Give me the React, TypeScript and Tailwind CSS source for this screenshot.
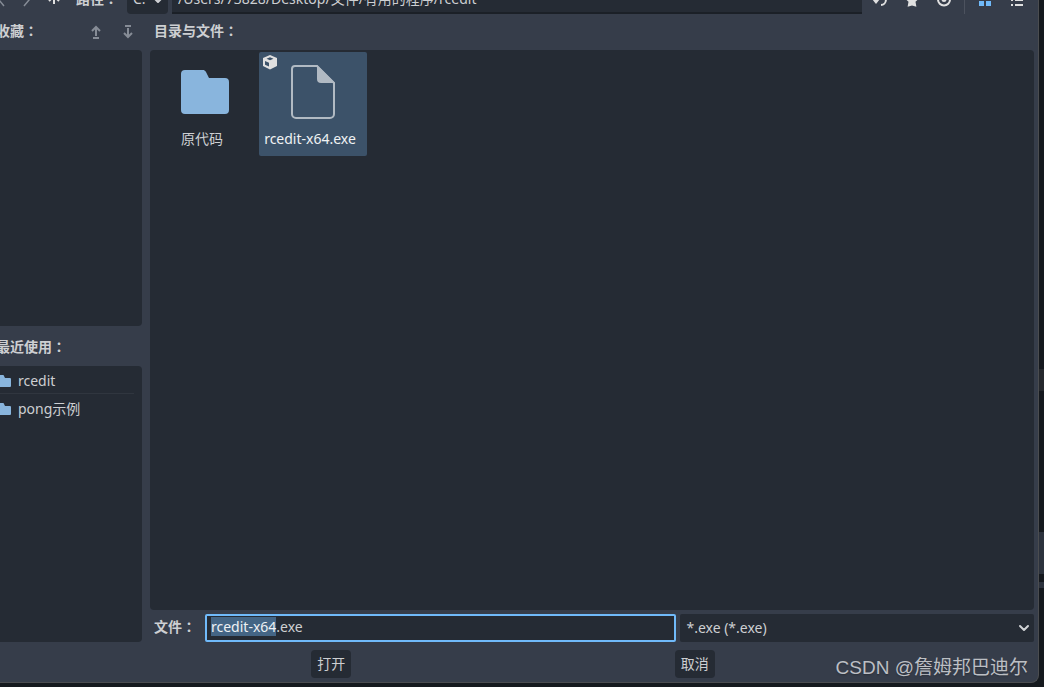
import React, { useEffect, useRef } from 'react';

const favorites: string[] = [];
const recents = ['rcedit', 'pong示例'];

// CJK colon is centred in its cell, unlike the SC glyph
function Title({ children, htmlFor }: { children: string; htmlFor?: string }) {
  const Tag = htmlFor ? 'label' : 'span';
  return (
    <Tag htmlFor={htmlFor} className="font-bold whitespace-nowrap">
      {children}
      <span className="font-['Noto_Sans_CJK_TC',sans-serif]">：</span>
    </Tag>
  );
}

function IconButton({ label, dim, children }: { label: string; dim?: boolean; children: React.ReactNode }) {
  return (
    <button
      aria-label={label}
      className={`flex h-7 w-7 shrink-0 items-center justify-center ${dim ? 'text-[#868c96]' : 'text-[#e0e0e0]'}`}
    >
      <svg viewBox="0 0 16 16" className="h-4 w-4" fill="none" stroke="currentColor" strokeWidth="2">
        {children}
      </svg>
    </button>
  );
}

function SmallFolder() {
  return (
    <svg viewBox="0 0 16 16" className="h-4 w-4 shrink-0" fill="#89b5dd">
      <path d="M2 2a1 1 0 0 0-1 1v10a1 1 0 0 0 1 1h12a1 1 0 0 0 1-1V6a1 1 0 0 0-1-1H9L8 3a1 1 0 0 0-1-1z" />
    </svg>
  );
}

function Chevron() {
  return (
    <svg viewBox="0 0 16 16" className="pointer-events-none absolute top-1.5 right-0.5 h-4 w-4" fill="none" stroke="#d0d2d5" strokeWidth="2">
      <path d="M4 6l4 4 4-4" strokeLinecap="round" strokeLinejoin="round" />
    </svg>
  );
}

export default function App() {
  const fileRef = useRef<HTMLInputElement>(null);

  // select the base name only, like a native file dialog
  useEffect(() => {
    const input = fileRef.current;
    if (!input) return;
    input.focus();
    input.setSelectionRange(0, input.value.lastIndexOf('.'));
  }, []);

  return (
    <div className="relative flex h-screen overflow-hidden bg-[#15191e] pb-1 font-['Noto_Sans','Noto_Sans_CJK_SC',sans-serif] text-sm text-[#cdcfd2]">
      <main className="-ml-1 flex min-w-0 flex-1 flex-col rounded-br-lg border-r border-b border-[#4b4d50] bg-[#363d4a] pr-1 pb-1">
        {/* Toolbar */}
        <header className="flex h-3.5 shrink-0 items-end gap-1 overflow-hidden pr-[3px]">
          <div className="-ml-3 flex shrink-0">
            <IconButton label="后退" dim><path d="m14 1-5 7 5 6" strokeWidth="1.500" /></IconButton>
            <IconButton label="前进" dim><path d="m5 2 5 6-5 6" strokeWidth="1.500" transform="translate(1 0)" /></IconButton>
            <IconButton label="上一级"><path d="M8 12V4M3 9l5-5 5 5" /></IconButton>
          </div>
          <div className="flex h-7 w-[51px] shrink-0 items-center pb-1 pl-1"><Title htmlFor="path">路径</Title></div>
          <div className="relative h-7 w-[41px] shrink-0">
            <select aria-label="驱动器" className="h-7 w-full appearance-none rounded-sm bg-[#252b34] pb-0.5 pl-1.5">
              <option>C:</option>
            </select>
            <Chevron />
          </div>
          <input
            id="path"
            defaultValue="/Users/73828/Desktop/文件/有用的程序/rcedit"
            className="h-7 min-w-0 flex-1 border-b-2 border-[#1b2027] bg-[#252b34] px-1.5 pb-0.5"
          />
          <IconButton label="刷新">
            <path d="M9 13a5 5 0 1 0-5-6" />
            <path d="M0 7h8l-4 5z" fill="currentColor" stroke="none" />
          </IconButton>
          <IconButton label="收藏">
            <path d="m8 1 2.200 4.600 5 .7-3.700 3.500.9 5L8 13.500l-4.400 1.300.9-5L.8 6.300l5-.7z" fill="currentColor" stroke="none" />
          </IconButton>
          <IconButton label="显示隐藏文件">
            <circle cx="8" cy="7.500" r="6" />
            <circle cx="8" cy="7.500" r="2.500" fill="currentColor" stroke="none" />
          </IconButton>
          <div className="mx-0.5 h-7 w-px shrink-0 bg-[#4c525e]" />
          <IconButton label="缩略图">
            <path d="M2 3h5v5H2zM9 3h5v5H9zM2 9h5v5H2zM9 9h5v5H9z" fill="#70bafa" stroke="none" />
          </IconButton>
          <IconButton label="列表">
            <path d="M2 3h2M6 3h8M2 8h2M6 8h8M2 13h2M6 13h8" />
          </IconButton>
        </header>

        <div className="flex min-h-0 flex-1 gap-2">
          <aside className="flex w-[146px] shrink-0 flex-col">
            <div className="flex h-9 shrink-0 items-center gap-1">
              <div className="flex-1 pb-1"><Title>收藏</Title></div>
              <IconButton label="上移" dim><path d="M8 12V3M4 7l4-4 4 4M5 14h6" /></IconButton>
              <IconButton label="下移" dim><path d="M8 4v9M4 9l4 4 4-4M5 2h6" /></IconButton>
            </div>
            <ul className="flex-1 rounded-r-sm bg-[#252b34]">
              {favorites.map((f) => <li key={f}>{f}</li>)}
            </ul>
            <div className="flex h-10 shrink-0 items-center"><Title>最近使用</Title></div>
            <ul className="flex-1 divide-y divide-[#30363f] rounded-r-sm bg-[#252b34] pr-2">
              {recents.map((name) => (
                <li key={name} className="flex h-7 items-center gap-1.5 pt-0.5"><SmallFolder />{name}</li>
              ))}
            </ul>
          </aside>

          <section className="flex min-w-0 flex-1 flex-col">
            <div className="flex h-9 shrink-0 items-center pb-1 pl-1"><Title>目录与文件</Title></div>
            <ul className="flex flex-1 rounded-sm bg-[#252b34] pt-0.5 pl-px">
              <li className="flex h-26 w-27 flex-col items-center pt-2">
                <svg viewBox="0 0 64 64" className="h-16 w-16" fill="#89b5dd">
                  <path d="M12 10a4 4 0 0 0-4 4v36a4 4 0 0 0 4 4h40a4 4 0 0 0 4-4V22a4 4 0 0 0-4-4H36l-3-6c-1-1.500-2-2-3-2z" />
                </svg>
                <span className="mt-[5px] mr-1.5">原代码</span>
              </li>
              <li className="relative flex h-26 w-27 flex-col items-center rounded-xs bg-[#3c5269] pt-2 text-[#f0f2f4]">
                <svg viewBox="0 0 16 16" className="absolute top-0.5 left-[3px] h-4 w-4">
                  <path d="m8 1 7 3v8l-7 3.500L1 12V4z" fill="#e0e0e0" />
                  <path d="m8 3.200 3.500 1.500L8 6.300 4.500 4.700zM3 7l4 1.800v3.700l-4-1.800z" fill="#3c5269" />
                </svg>
                <svg viewBox="0 0 64 64" className="h-16 w-16">
                  <path d="M14 6h22l17 17v31a4 4 0 0 1-4 4H15a4 4 0 0 1-4-4V9a3 3 0 0 1 3-3z" fill="none" stroke="#b1bac3" strokeWidth="2" />
                  <path d="M36 5v14a4 4 0 0 0 4 4h14z" fill="#b1bac3" />
                </svg>
                <span className="mt-[5px] mr-1.5">rcedit-x64.exe</span>
              </li>
            </ul>
            <div className="mt-1 flex h-7 shrink-0 items-center gap-1">
              <div className="w-[51px] shrink-0 pb-1 pl-1"><Title htmlFor="file">文件</Title></div>
              <div className="grid min-w-0 flex-1 grid-cols-[4fr_3fr] gap-1">
                <input
                  id="file"
                  ref={fileRef}
                  defaultValue="rcedit-x64.exe"
                  className="h-7 w-full rounded-xs border-2 border-[#70bafa] bg-[#252b34] px-1 pb-1 outline-none selection:bg-[#446585] selection:text-[#eef1f4]"
                />
                <div className="relative h-7">
                  <select aria-label="文件类型" className="h-7 w-full appearance-none rounded-xs bg-[#252b34] px-1.5">
                    <option>*.exe (*.exe)</option>
                  </select>
                  <Chevron />
                </div>
              </div>
            </div>
          </section>
        </div>

        <footer className="mt-2 -mr-1 -ml-2 flex justify-evenly">
          <button className="h-7 rounded-sm bg-[#252b34] px-1.5">打开</button>
          <button className="h-7 rounded-sm bg-[#252b34] px-1.5">取消</button>
        </footer>
      </main>

      {/* Sliver of the editor window behind the dialog */}
      <div className="flex w-[5px] shrink-0 flex-col justify-end">
        <div className="h-[22px] bg-[#25282d]" />
        <div className="mt-[141px] h-[42px] bg-[#2c323d]" />
        <div className="mt-2 mb-[95px] h-1.5 bg-[#2c323d]" />
      </div>

      <span className="pointer-events-none absolute right-4 bottom-1.5 font-['Liberation_Sans','Noto_Sans_CJK_SC',sans-serif] text-[19px] text-[#bcbfc4] text-shadow-sm">
        CSDN @詹姆邦巴迪尔
      </span>
    </div>
  );
}
